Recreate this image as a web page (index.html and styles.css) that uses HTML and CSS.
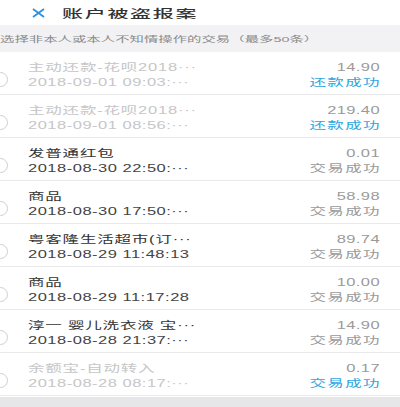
FILE: index.html
```html
<!DOCTYPE html>
<html>
<head>
    <meta charset="utf-8">
    <title>账户被盗报案</title>
    <link rel="stylesheet" href="styles.css">
</head>
<body>
    <!-- 顶部标题 -->
    <div class="header">
        <svg class="close" width="13" height="10" viewBox="0 0 13 10">
            <path d="M1 1 L12 9 M12 1 L1 9" stroke="#2d8fe0" stroke-width="1.8" fill="none"/>
        </svg>
        <span class="title">账户被盗报案</span>
    </div>

    <!-- 提示 -->
    <div class="tip"><span>选择非本人或本人不知情操作的交易（最多50条）</span></div>

    <!-- 交易列表 -->
    <div class="list">
        <div class="row disabled">
            <span class="check"></span>
            <div class="info">
                <span class="name">主动还款-花呗2018···</span>
                <span class="date">2018-09-01 09:03:···</span>
            </div>
            <div class="side">
                <span class="amount">14.90</span>
                <span class="status blue">还款成功</span>
            </div>
        </div>
        <div class="row disabled">
            <span class="check"></span>
            <div class="info">
                <span class="name">主动还款-花呗2018···</span>
                <span class="date">2018-09-01 08:56:···</span>
            </div>
            <div class="side">
                <span class="amount">219.40</span>
                <span class="status blue">还款成功</span>
            </div>
        </div>
        <div class="row">
            <span class="check"></span>
            <div class="info">
                <span class="name">发普通红包</span>
                <span class="date">2018-08-30 22:50:···</span>
            </div>
            <div class="side">
                <span class="amount">0.01</span>
                <span class="status">交易成功</span>
            </div>
        </div>
        <div class="row">
            <span class="check"></span>
            <div class="info">
                <span class="name">商品</span>
                <span class="date">2018-08-30 17:50:···</span>
            </div>
            <div class="side">
                <span class="amount">58.98</span>
                <span class="status">交易成功</span>
            </div>
        </div>
        <div class="row">
            <span class="check"></span>
            <div class="info">
                <span class="name">粤客隆生活超市(订···</span>
                <span class="date">2018-08-29 11:48:13</span>
            </div>
            <div class="side">
                <span class="amount">89.74</span>
                <span class="status">交易成功</span>
            </div>
        </div>
        <div class="row">
            <span class="check"></span>
            <div class="info">
                <span class="name">商品</span>
                <span class="date">2018-08-29 11:17:28</span>
            </div>
            <div class="side">
                <span class="amount">10.00</span>
                <span class="status">交易成功</span>
            </div>
        </div>
        <div class="row">
            <span class="check"></span>
            <div class="info">
                <span class="name">淳一 婴儿洗衣液 宝···</span>
                <span class="date">2018-08-28 21:37:···</span>
            </div>
            <div class="side">
                <span class="amount">14.90</span>
                <span class="status">交易成功</span>
            </div>
        </div>
        <div class="row disabled">
            <span class="check"></span>
            <div class="info">
                <span class="name">余额宝-自动转入</span>
                <span class="date">2018-08-28 08:17:···</span>
            </div>
            <div class="side">
                <span class="amount">0.17</span>
                <span class="status blue">交易成功</span>
            </div>
        </div>
    </div>

    <div class="footer"></div>
</body>
</html>
```

FILE: styles.css
```css
/* 样式定义 */
body {
    margin: 0;
    padding: 0;
    background-color: #FFFFFF;
    font-family: "Liberation Sans", "Noto Sans CJK SC", sans-serif;
    overflow: hidden;
}

.header {
    height: 25px;
    display: flex;
    align-items: center;
    padding-left: 32px;
}

.header .close {
    display: block;
    margin-right: 17px;
}

.header .title {
    display: inline-block;
    font-size: 21px;
    letter-spacing: 1.7px;
    color: #333333;
    font-weight: 500;
    transform: scaleY(0.52);
}

.tip {
    height: 27px;
    background-color: #F2F2F4;
    display: flex;
    align-items: center;
    overflow: hidden;
    white-space: nowrap;
}

.tip span {
    display: inline-block;
    font-size: 14.4px;
    color: #8A8A8A;
    transform: scaleY(0.52);
}

.row {
    height: 43px;
    box-sizing: border-box;
    display: flex;
    align-items: flex-start;
    padding: 8px 20px 0 0;
    border-bottom: 1px solid #E9E9EB;
}

.row .check {
    width: 13px;
    height: 13px;
    margin: 12px 20px 0 -7px;
    border: 1px solid #CFCFD2;
    border-radius: 50%;
    flex-shrink: 0;
}

.info {
    flex: 1;
    display: flex;
    flex-direction: column;
    white-space: nowrap;
    overflow: hidden;
}

.side {
    display: flex;
    flex-direction: column;
    align-items: flex-end;
}

.name, .date, .amount, .status {
    display: block;
    font-size: 16.5px;
    line-height: 15px;
    transform: scaleY(0.64);
}

.name {
    color: #333333;
    letter-spacing: 0.8px;
    transform-origin: left center;
}

.date {
    color: #444444;
    letter-spacing: 0.5px;
    transform-origin: left center;
}

.amount {
    color: #9A9A9A;
    letter-spacing: 0.4px;
    transform-origin: right center;
}

.status {
    color: #9A9A9A;
    letter-spacing: 1.4px;
    margin-right: -1px;
    transform-origin: right center;
}

.row.disabled .name,
.row.disabled .date {
    color: #C6C6C8;
}

.status.blue {
    color: #2EA7E0;
}

.footer {
    height: 10px;
    margin-top: 1px;
    background-color: #E6E6E8;
}
```
